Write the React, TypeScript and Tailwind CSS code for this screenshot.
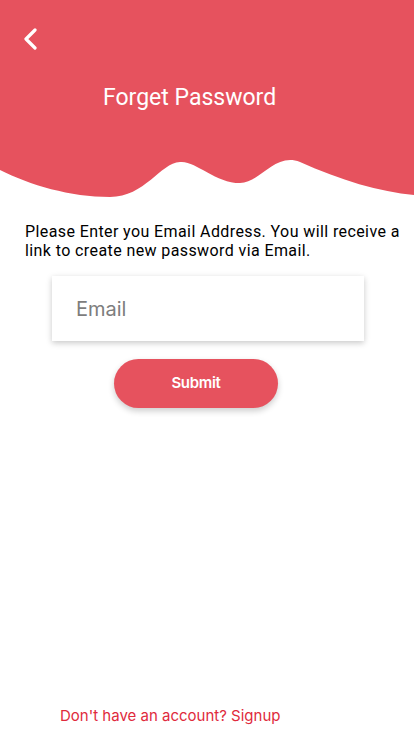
export default function App() {
  return (
    <div
      className="w-[414px] h-[736px] bg-white flex flex-col relative overflow-hidden"
      style={{ fontFamily: "Inter, Roboto, 'Noto Sans', sans-serif" }}
    >
      {/* Header */}
      <div className="relative h-[200px] shrink-0">
        <svg
          className="absolute inset-0"
          width="414"
          height="200"
          viewBox="0 0 414 200"
        >
          <path
            d="M0 0 H414 V195 C380 192 340 180 300 162 C275 152 260 183 240 183 C215 183 195 160 180 162 C160 163 145 197 110 197 C70 197 30 185 0 170 Z"
            fill="#e6525e"
          />
        </svg>

        <div className="relative flex flex-col">
          <button className="ml-[22px] mt-[28px] w-[18px] h-[22px] flex items-center">
            <svg width="16" height="22" viewBox="0 0 16 22">
              <path
                d="M13 2 L4 11 L13 20"
                fill="none"
                stroke="white"
                strokeWidth="3.2"
                strokeLinecap="round"
                strokeLinejoin="round"
              />
            </svg>
          </button>

          <h1 className="mt-[34px] ml-[103px] text-[23px] leading-[28px] text-white font-[Roboto]">
            Forget Password
          </h1>
        </div>
      </div>

      {/* Body */}
      <div className="flex flex-col items-start pt-[22px]">
        <p className="pl-[25px] pr-[6px] text-[16px] leading-[19px] text-black font-[Roboto] tracking-[0.4px]">
          Please Enter you Email Address. You will receive a link to create new
          password via Email.
        </p>

        <div className="ml-[52px] mt-[16px] w-[312px] h-[65px] bg-white shadow-[0_2px_6px_rgba(0,0,0,0.22)] flex items-center">
          <input
            placeholder="Email"
            className="w-full h-full pl-[24px] text-[20px] text-black placeholder:text-[#7d7d7d] outline-none bg-transparent"
          />
        </div>

        <button className="ml-[114px] mt-[18px] w-[164px] h-[49px] rounded-full bg-[#e6525e] shadow-[0_3px_6px_rgba(0,0,0,0.2)] text-white text-[15px] font-semibold tracking-[-0.3px]">
          Submit
        </button>
      </div>

      {/* Footer */}
      <div className="mt-auto pb-[9px] pl-[60px]">
        <span className="text-[15px] leading-[20px] text-[#e02a3c]">
          Don't have an account? Signup
        </span>
      </div>
    </div>
  );
}
